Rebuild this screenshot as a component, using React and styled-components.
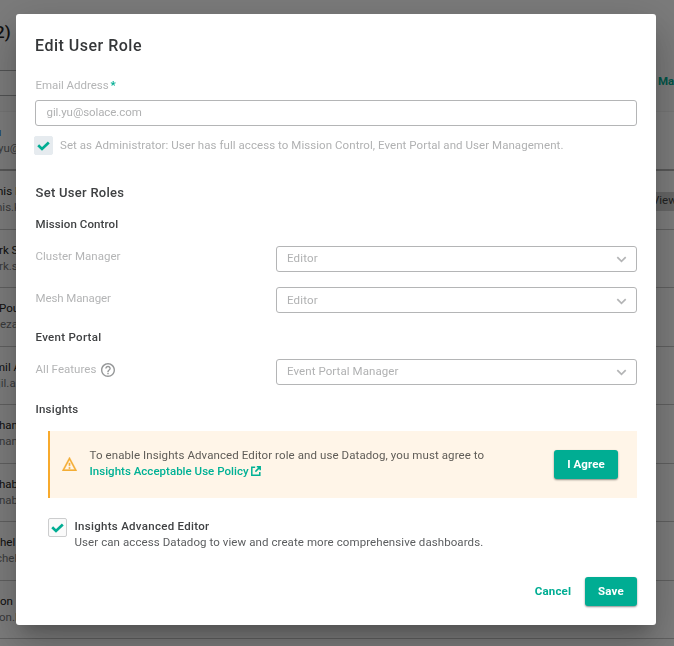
import React from 'react';
import styled, { createGlobalStyle } from 'styled-components';

const GlobalStyle = createGlobalStyle`
  *, *::before, *::after { box-sizing: border-box; }
  html, body { margin: 0; padding: 0; overflow: hidden; }
  body { font-family: Roboto, "Liberation Sans", sans-serif; font-size: 11.5px; line-height: 16px; color: #3f4244; }
`;

const Page = styled.div`
  width: 674px;
  height: 646px;
  overflow: hidden;
  display: flex;
  flex-direction: column;
  background: #fff;
`;

const PageHeader = styled.header`
  flex: none;
  height: 111px;
  padding-top: 22px;
  background: #fafafa;
  overflow: hidden;
`;

const PageTitle = styled.h1`
  margin: 0 0 0 -5px;
  font-size: 17px;
  line-height: 20px;
  font-weight: 500;
  color: #222;
`;

const FilterBar = styled.div`
  display: flex;
  justify-content: space-between;
  align-items: center;
  height: 26px;
  margin-top: 28px;
`;

const SearchBox = styled.div`
  width: 200px;
  height: 26px;
  background: #fff;
  border: solid #a8aaac;
  border-width: 1px 0;
`;

const ManageLink = styled.span`
  width: 16px;
  margin-top: -4px;
  font-weight: 700;
  color: #00ad93;
  white-space: nowrap;
`;

const UserRow = styled.div`
  flex: none;
  display: flex;
  justify-content: space-between;
  align-items: flex-start;
  height: ${p => (p.$current ? '60px' : '58.55px')};
  padding-top: 12px;
  border-top: 1px solid ${p => (p.$current ? '#f0f0f0' : p.$afterCurrent ? 'transparent' : '#c6c6c6')};
  border-bottom: ${p => (p.$current ? '2px solid #b4b4b4' : '0')};
  margin-top: ${p => (p.$afterCurrent ? '-1px' : '0')};
`;

const UserText = styled.div`
  width: 16px;
  white-space: nowrap;
`;

const UserName = styled.div`
  margin-left: ${p => p.$shift}px;
  color: ${p => (p.$current ? '#2f7de0' : '#222')};
`;

const UserEmail = styled.div`
  margin-left: ${p => p.$shift}px;
  color: #77797b;
`;

const RoleChip = styled.span`
  width: 22px;
  height: 19px;
  margin-top: 9px;
  line-height: 17px;
  background: #d2d2d2;
  color: #444;
  white-space: nowrap;
`;

const Overlay = styled.div`
  position: fixed;
  inset: 0;
  display: flex;
  align-items: flex-start;
  justify-content: center;
  padding: 14px 18px 0 16px;
  background: rgba(0, 0, 0, 0.51);
`;

const Dialog = styled.section`
  width: 640px;
  height: 611px;
  padding: 20px 19px 19px;
  display: flex;
  flex-direction: column;
  background: #fff;
  border-radius: 3px;
  box-shadow: 0 11px 15px -7px rgba(0, 0, 0, 0.2), 0 24px 38px 3px rgba(0, 0, 0, 0.14),
    0 9px 46px 8px rgba(0, 0, 0, 0.12);
`;

const Text = styled.span`
  letter-spacing: ${p => p.$track || 0}px;
  white-space: nowrap;
`;

const DialogTitle = styled.h2`
  margin: 0;
  font-size: 16px;
  line-height: 24px;
  font-weight: 500;
  letter-spacing: 0.5px;
  color: #353739;
`;

const FieldLabel = styled.label`
  display: flex;
  gap: 2px;
  margin-top: 19px;
  padding-left: 0.5px;
  letter-spacing: -0.04px;
  color: #b4b5b6;
`;

const Required = styled.span`
  font-weight: 700;
  color: #00ad93;
`;

const Input = styled.div`
  height: 26px;
  margin-top: 7px;
  padding: 0 10.5px;
  line-height: 23px;
  letter-spacing: -0.08px;
  border: 1px solid #b4b5b6;
  border-radius: 3px;
  color: #b0b1b2;
`;

const AdminOption = styled.div`
  display: flex;
  height: 19px;
  margin: 10px 0 0 -1px;
  gap: 7px;
  line-height: 18px;
  color: #b0b1b2;
`;

const CheckBox = styled.span`
  flex: none;
  display: flex;
  align-items: center;
  justify-content: center;
  width: 19px;
  height: 19px;
  border-radius: 2px;
  background: ${p => (p.$disabled ? '#e6ebef' : '#fafafa')};
  border: 1px solid ${p => (p.$disabled ? '#e6ebef' : '#cccdce')};
`;

const SectionTitle = styled.h3`
  margin: 29px 0 0;
  padding-left: 0.5px;
  font-size: 13px;
  line-height: 17px;
  font-weight: 500;
  letter-spacing: 0.28px;
  color: #3f4143;
`;

const GroupTitle = styled.h4`
  margin: ${p => p.$top}px 0 0;
  padding-left: 0.5px;
  font-size: 11.5px;
  line-height: 16px;
  font-weight: 500;
  letter-spacing: ${p => p.$track}px;
  color: #404244;
`;

const RoleRow = styled.div`
  display: grid;
  grid-template-columns: 241px 1fr;
  align-items: start;
  height: 26px;
  margin-top: ${p => p.$top}px;
`;

const RoleLabel = styled.div`
  display: flex;
  align-items: center;
  gap: 5px;
  height: 16px;
  margin-top: ${p => p.$top}px;
  padding-left: 0.5px;
  color: #b4b5b6;
  svg { margin-top: 1px; }
`;

const Select = styled.div`
  display: flex;
  align-items: flex-start;
  justify-content: space-between;
  height: 26px;
  padding: ${p => (p.$low ? 4 : 3)}px 9px 0 10px;
  border: 1px solid #b4b5b6;
  border-radius: 3px;
  color: #b0b1b2;
  svg { margin-top: 6px; }
`;

const Alert = styled.div`
  flex: none;
  display: flex;
  align-items: center;
  height: 67px;
  margin: 14px 0 0 13px;
  padding: 0 19px 0 12px;
  background: #fff5e8;
  border-left: 2px solid #f8aa2c;
  > svg { margin-top: -2px; }
`;

const AlertMessage = styled.div`
  flex: 1;
  margin: -3px 0 0 12.5px;
  color: #5f5c57;
`;

const PolicyLink = styled.a`
  display: flex;
  align-items: center;
  gap: 2px;
  font-weight: 500;
  color: #00b195;
`;

const Button = styled.button`
  flex: none;
  width: ${p => p.$width}px;
  height: 29px;
  padding: 0;
  border: 0;
  border-radius: 3px;
  background: #00ad93;
  color: #fff;
  font: 700 11.5px/29px Roboto, "Liberation Sans", sans-serif;
  letter-spacing: ${p => p.$track}px;
  box-shadow: 0 1px 2px rgba(0, 0, 0, 0.45);
`;

const ButtonLabel = styled.span`
  display: block;
  height: 29px;
  line-height: 28px;
`;

const TextButton = styled(Button)`
  background: transparent;
  color: #00ad93;
  box-shadow: none;
`;

const EditorOption = styled.div`
  display: flex;
  gap: 7.5px;
  margin: 20px 0 0 13px;
`;

const OptionText = styled.div`
  display: flex;
  flex-direction: column;
  color: #5b5d5f;
`;

const OptionTitle = styled(Text)`
  font-weight: 500;
  color: #404244;
`;

const Actions = styled.footer`
  display: flex;
  justify-content: flex-end;
  gap: 12px;
  margin-top: auto;
`;

const Check = () => (
  <svg width="13" height="10" viewBox="0 0 13 10" fill="none" stroke="#00ad93" strokeWidth="2.7">
    <path d="M1.2 4.3 5 7.9 11.8 1.5" />
  </svg>
);

const Chevron = () => (
  <svg width="11" height="7" viewBox="0 0 11 7" fill="none" stroke="#b4b5b6" strokeWidth="1.7">
    <path d="M1.3 1.2 5.5 5.4 9.7 1.2" />
  </svg>
);

const Help = () => (
  <svg width="14" height="14" viewBox="2 2 20 20" fill="#969899">
    <path d="M11 18h2v-2h-2v2zm1-16C6.48 2 2 6.48 2 12s4.48 10 10 10 10-4.48 10-10S17.52 2 12 2zm0 18c-4.41 0-8-3.59-8-8s3.59-8 8-8 8 3.59 8 8-3.59 8-8 8zm0-14c-2.21 0-4 1.79-4 4h2c0-1.1.9-2 2-2s2 .9 2 2c0 2-3 1.75-3 5h2c0-2.25 3-2.5 3-5 0-2.21-1.79-4-4-4z" />
  </svg>
);

const Warning = () => (
  <svg width="15" height="14" viewBox="1 2 22 19" preserveAspectRatio="none" fill="#f4ae36" stroke="#f4ae36" strokeWidth="0.4">
    <path d="M12 5.99 19.53 19H4.47L12 5.99M12 2 1 21h22L12 2zm1 14h-2v2h2v-2zm0-6h-2v4h2v-4z" />
  </svg>
);

const External = () => (
  <svg width="10" height="10" viewBox="0 0 10 10" fill="none" stroke="#00b195" strokeWidth="1.5">
    <path d="M4.2 1.2H.8v8h8V6M5.8.8h3.4v3.4M9.1.9 4.4 5.6" />
  </svg>
);

const users = [
  { name: 'u', email: 'yu@', n: -5, e: -2, current: true },
  { name: 'nis K', email: 'nis.k', n: -3, e: -4, chip: 'View' },
  { name: 'rk S', email: 'rk.s', n: -1, e: -1 },
  { name: 'Pou', email: 'eza', n: -1, e: 0 },
  { name: 'mil A', email: 'jil.a', n: -5, e: -2 },
  { name: 'han', email: 'nan', n: -1, e: -1 },
  { name: 'hab', email: 'nab', n: -1, e: -1 },
  { name: 'hel', email: 'chel', n: 0, e: -4 },
  { name: 'on', email: 'on.l', n: 0, e: -1 },
  { name: '', email: '', n: 0, e: 0 },
];

export default function App() {
  return (
    <>
      <GlobalStyle />
      <Page>
        <PageHeader>
          <PageTitle>2)</PageTitle>
          <FilterBar>
            <SearchBox />
            <ManageLink>Ma</ManageLink>
          </FilterBar>
        </PageHeader>
        {users.map((u, i) => (
          <UserRow key={i} $current={u.current} $afterCurrent={i > 0 && users[i - 1].current}>
            <UserText>
              <UserName $shift={u.n} $current={u.current}>{u.name}</UserName>
              <UserEmail $shift={u.e}>{u.email}</UserEmail>
            </UserText>
            {u.chip && <RoleChip>{u.chip}</RoleChip>}
          </UserRow>
        ))}
      </Page>
      <Overlay>
        <Dialog role="dialog">
          <DialogTitle>Edit User Role</DialogTitle>
          <FieldLabel>
            Email Address <Required>*</Required>
          </FieldLabel>
          <Input>gil.yu@solace.com</Input>
          <AdminOption>
            <CheckBox $disabled><Check /></CheckBox>
            <Text $track={0.06}>
              Set as Administrator: User has full access to Mission Control, Event Portal and User Management.
            </Text>
          </AdminOption>

          <SectionTitle>Set User Roles</SectionTitle>

          <GroupTitle $top={15} $track={0.1}>Mission Control</GroupTitle>
          <RoleRow $top={14}>
            <RoleLabel $top={2}><Text $track={0.03}>Cluster Manager</Text></RoleLabel>
            <Select><Text $track={0.18}>Editor</Text><Chevron /></Select>
          </RoleRow>
          <RoleRow $top={15}>
            <RoleLabel $top={3}><Text $track={-0.1}>Mesh Manager</Text></RoleLabel>
            <Select $low><Text $track={0.18}>Editor</Text><Chevron /></Select>
          </RoleRow>

          <GroupTitle $top={16} $track={0.3}>Event Portal</GroupTitle>
          <RoleRow $top={14}>
            <RoleLabel $top={2}><Text $track={0.04}>All Features</Text><Help /></RoleLabel>
            <Select><Text $track={0.08}>Event Portal Manager</Text><Chevron /></Select>
          </RoleRow>

          <GroupTitle $top={16} $track={0.22}>Insights</GroupTitle>
          <Alert>
            <Warning />
            <AlertMessage>
              <Text $track={0.092}>To enable Insights Advanced Editor role and use Datadog, you must agree to</Text>
              <PolicyLink>
                <Text $track={0.02}>Insights Acceptable Use Policy</Text>
                <External />
              </PolicyLink>
            </AlertMessage>
            <Button $width={64} $track={0.1}><ButtonLabel>I Agree</ButtonLabel></Button>
          </Alert>

          <EditorOption>
            <CheckBox><Check /></CheckBox>
            <OptionText>
              <OptionTitle $track={0.29}>Insights Advanced Editor</OptionTitle>
              <Text $track={0.083}>User can access Datadog to view and create more comprehensive dashboards.</Text>
            </OptionText>
          </EditorOption>

          <Actions>
            <TextButton $width={40} $track={0.15}><ButtonLabel>Cancel</ButtonLabel></TextButton>
            <Button $width={52} $track={0.2}><ButtonLabel>Save</ButtonLabel></Button>
          </Actions>
        </Dialog>
      </Overlay>
    </>
  );
}
